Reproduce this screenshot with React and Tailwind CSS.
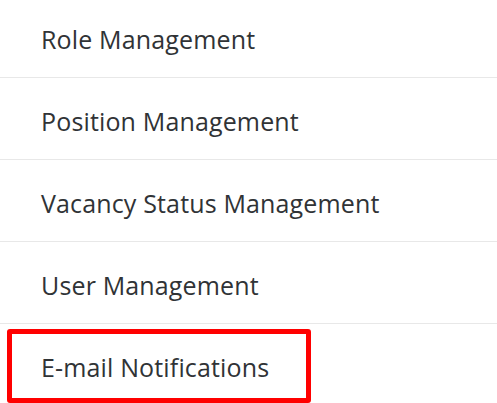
export default function App() {
  const items = [
    "Role Management",
    "Position Management",
    "Vacancy Status Management",
    "User Management",
    "E-mail Notifications",
  ];
  return (
    <div
      className="relative w-[497px] h-[403px] overflow-hidden bg-white"
      style={{ fontFamily: '"Open Sans", sans-serif' }}
    >
      <ul className="-mt-[4px]">
        {items.map((t) => (
          <li
            key={t}
            className="h-[82px] border-b border-[#e8e8e8] pl-[41px] pt-[27px] text-[25px] leading-[32px] tracking-[0.15px] text-[#303336]"
          >
            {t}
          </li>
        ))}
      </ul>
      <div className="absolute left-[7px] top-[329px] w-[304px] h-[74px] border-[5px] border-[#ff0000] rounded-[3px]" />
    </div>
  );
}
